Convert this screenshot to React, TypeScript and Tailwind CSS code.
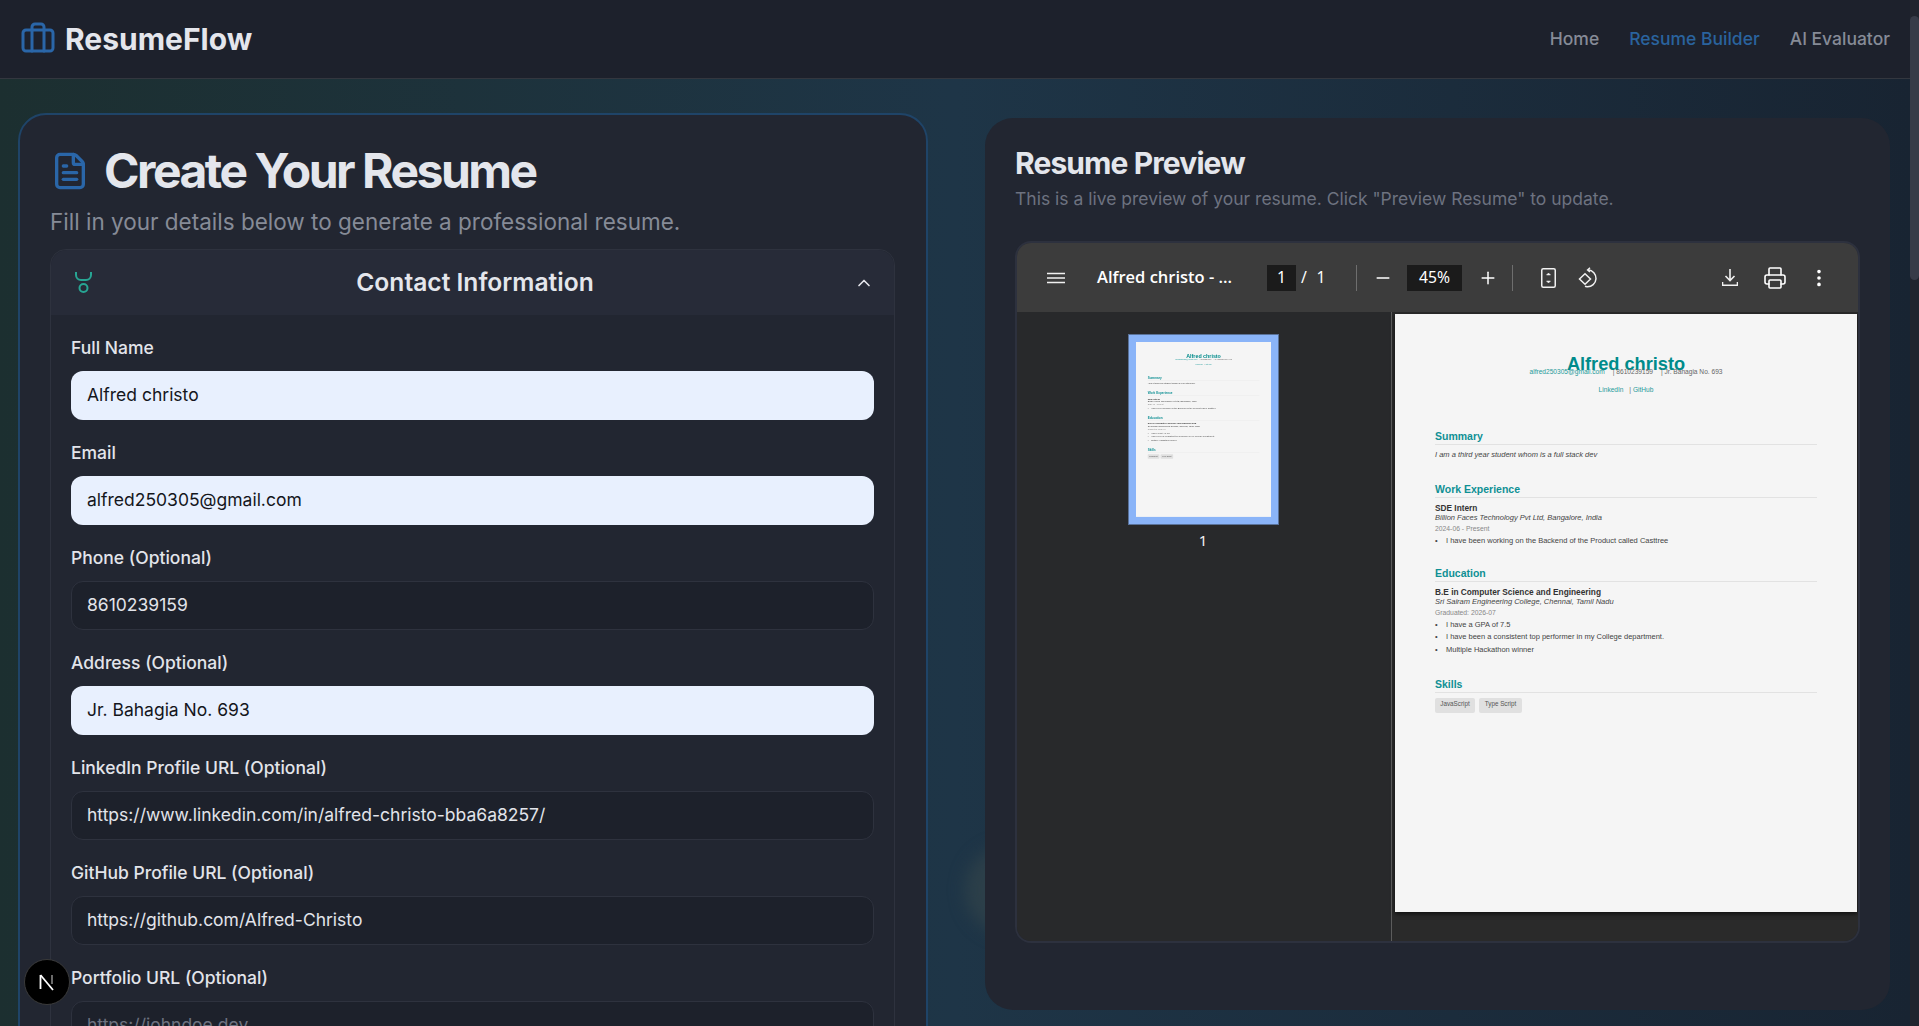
import { ChevronUp, FileText, Briefcase, Minus, MoreVertical, Plus, Printer } from "lucide-react";

const FIELDS = [
  { label: "Full Name", value: "Alfred christo", filled: true },
  { label: "Email", value: "alfred250305@gmail.com", filled: true },
  { label: "Phone (Optional)", value: "8610239159", filled: false },
  { label: "Address (Optional)", value: "Jr. Bahagia No. 693", filled: true },
  { label: "LinkedIn Profile URL (Optional)", value: "https://www.linkedin.com/in/alfred-christo-bba6a8257/", filled: false },
  { label: "GitHub Profile URL (Optional)", value: "https://github.com/Alfred-Christo", filled: false },
];

function Field({ label, value, filled }: { label: string; value: string; filled: boolean }) {
  return (
    <div className="flex flex-col gap-[11px]">
      <label className="text-[17.5px] leading-6 font-medium text-[#e2e4ea]">{label}</label>
      <div
        className={
          filled
            ? "h-[49px] flex items-center px-4 rounded-xl bg-[#e8f0fe] text-[#14161c] text-[17.5px]"
            : "h-[49px] flex items-center px-[15px] rounded-xl bg-[#1d212b] border border-[#2e323e] text-[#e2e4ea] text-[17.5px]"
        }
      >
        {value}
      </div>
    </div>
  );
}

function SectionHeading({ children, className }: { children: string; className: string }) {
  return (
    <div className={className}>
      <div className="h-[13px] text-[10.5px] leading-[13px] font-bold text-[#0f9094]">{children}</div>
      <div className="h-px mt-[1px] bg-[#e2e2e2]" />
    </div>
  );
}

function Bullet({ children, className = "" }: { children: string; className?: string }) {
  return (
    <div className={`flex text-[7.5px] leading-[10px] text-[#444] ${className}`}>
      <span className="w-[11px]">•</span>
      <span>{children}</span>
    </div>
  );
}

/** The PDF page, laid out at the 45% zoom size; the thumbnail scales this same page down. */
function ResumePage() {
  return (
    <div className="w-[462px] h-[598px] bg-[#f5f5f5] pt-[41px] px-[40px] font-['Liberation_Sans',Arial,sans-serif]">
      <div className="text-center text-[18.2px] leading-[18px] font-bold text-[#008b8b]">Alfred christo</div>
      <div className="-mt-[5px] text-center text-[6.6px] leading-[8px] text-[#666] whitespace-nowrap">
        <span className="text-[#1e9a9a]">alfred250305@gmail.com</span>
        <span className="ml-2">| 8610239159</span>
        <span className="ml-2">| Jr. Bahagia No. 693</span>
      </div>
      <div className="mt-[10px] text-center text-[6.6px] leading-[8px] text-[#1e9a9a]">
        LinkedIn <span className="ml-1 text-[#666]">|</span> GitHub
      </div>

      <SectionHeading className="mt-[36px]">Summary</SectionHeading>
      <div className="mt-[5px] text-[7.5px] leading-[10px] italic text-[#444]">I am a third year student whom is a full stack dev</div>

      <SectionHeading className="mt-[23px]">Work Experience</SectionHeading>
      <div className="mt-[5px] text-[8.3px] leading-[10px] font-bold text-[#333]">SDE Intern</div>
      <div className="text-[7.5px] leading-[10px] italic text-[#444]">Billion Faces Technology Pvt Ltd, Bangalore, India</div>
      <div className="text-[6.8px] leading-[11px] text-[#888]">2024-06 - Present</div>
      <Bullet className="mt-[2px]">I have been working on the Backend of the Product called Casttree</Bullet>

      <SectionHeading className="mt-[20.5px]">Education</SectionHeading>
      <div className="mt-[5px] text-[8.3px] leading-[10px] font-bold text-[#333]">B.E in Computer Science and Engineering</div>
      <div className="text-[7.5px] leading-[10px] italic text-[#444]">Sri Sairam Engineering College, Chennai, Tamil Nadu</div>
      <div className="text-[6.8px] leading-[11px] text-[#888]">Graduated: 2026-07</div>
      <Bullet className="mt-[2px]">I have a GPA of 7.5</Bullet>
      <Bullet className="mt-[2.5px]">I have been a consistent top performer in my College department.</Bullet>
      <Bullet className="mt-[2.5px]">Multiple Hackathon winner</Bullet>

      <SectionHeading className="mt-[23.5px]">Skills</SectionHeading>
      <div className="mt-[5px] flex gap-[4px]">
        <span className="h-[15px] w-[40px] text-center pt-[1.5px] rounded-[2px] bg-[#e0e0e0] text-[6.3px] leading-[8px] text-[#555]">JavaScript</span>
        <span className="h-[15px] w-[43px] text-center pt-[1.5px] rounded-[2px] bg-[#e0e0e0] text-[6.3px] leading-[8px] text-[#555]">Type Script</span>
      </div>
    </div>
  );
}

function PdfToolbar() {
  return (
    <div className="h-[69px] shrink-0 bg-[#3c3c3c] flex items-center text-white font-['Noto_Sans',sans-serif] text-[15.7px]">
      <svg viewBox="0 0 18 12" className="ml-[30px] w-[18px] h-[12px]" fill="none" stroke="#f1f1f1" strokeWidth="1.6">
        <path d="M0 1.5h18M0 6h18M0 10.5h18" />
      </svg>
      <span className="ml-[32px] w-[138px] font-semibold whitespace-nowrap font-['Open_Sans',sans-serif] text-[16.5px]">Alfred christo - ...</span>
      <span className="ml-[32px] w-[29px] h-[26px] bg-[#1b1b1b] flex items-center justify-center">1</span>
      <span className="ml-[4px] w-[8px] text-center">/</span>
      <span className="ml-[8px] w-[10px] text-center">1</span>
      <span className="ml-[30px] w-px h-[26px] bg-[#6e6e6e]" />
      <Minus size={20} strokeWidth={1.8} className="ml-[16px]" />
      <span className="ml-[14px] w-[55px] h-[26px] bg-[#1b1b1b] flex items-center justify-center">45%</span>
      <Plus size={20} strokeWidth={1.8} className="ml-[16px]" />
      <span className="ml-[14px] w-px h-[26px] bg-[#6e6e6e]" />
      <svg viewBox="0 0 15 20" className="ml-[28px] w-[15px] h-[20px]" fill="none" stroke="#f1f1f1">
        <rect x="0.75" y="0.75" width="13.5" height="18.5" rx="1.5" strokeWidth="1.5" />
        <path d="M5.5 7 7.5 5l2 2ZM5.5 13l2 2 2-2Z" fill="#f1f1f1" strokeWidth="0.5" />
      </svg>
      <svg viewBox="0 0 22 22" className="ml-[22px] w-[22px] h-[22px]" fill="none" stroke="#f1f1f1" strokeWidth="1.5">
        <path d="M1.5 12 7 6.7l5.5 5.3L7 17.3Z" />
        <path d="M10 2.8a8.3 8.3 0 1 1-1 17 8 8 0 0 1-2-.5" />
        <path d="M12 .8 9.6 2.9 12 5" />
      </svg>
      <svg viewBox="0 0 16 18" className="ml-[122px] w-[16px] h-[18px]" fill="none" stroke="#f1f1f1" strokeWidth="1.6">
        <path d="M8 0v11M3.5 7 8 11.5 12.5 7M0.5 13v3.2h15V13" />
      </svg>
      <Printer size={24} strokeWidth={1.6} className="ml-[25px]" />
      <MoreVertical size={22} strokeWidth={2} className="ml-[21px]" />
    </div>
  );
}

function PdfViewer() {
  return (
    <div className="mt-[28px] h-[702px] rounded-2xl border-2 border-[#2d313e] overflow-hidden flex flex-col">
      <PdfToolbar />
      <div className="flex-1 flex min-h-0">
        <div className="w-[375px] shrink-0 bg-[#28292b] border-r border-[#5c5c5c] flex flex-col items-center pt-[22px] pr-[2px]">
          <div className="w-[151px] h-[191px] border border-[#5a7299] bg-[#8ab4f8] p-[7px]">
            <div className="w-[135px] h-[175px] overflow-hidden" aria-hidden="true">
              <div className="origin-top-left scale-[0.2925]">
                <ResumePage />
              </div>
            </div>
          </div>
          <span className="mt-[4px] text-[15px] text-[#f1f1f1] font-['Noto_Sans',sans-serif]">1</span>
        </div>
        <div className="flex-1 bg-[#2a2a2a] pl-[3px] pt-[2px]">
          <div className="shadow-[0_2px_4px_rgba(0,0,0,0.6)] w-[462px]">
            <ResumePage />
          </div>
        </div>
      </div>
    </div>
  );
}

export default function App() {
  return (
    <div className="h-screen overflow-hidden flex font-['Inter',sans-serif] bg-[#1e3244]">
      <div className="relative flex-1 min-w-0 flex flex-col bg-linear-to-r from-[#1c2f30] via-[#1e3547] to-[#182432]">
        <header className="h-[79px] shrink-0 bg-[#1d212c] border-b border-[#33373f] flex items-center justify-between pl-[20px] pr-[20px]">
          <div className="flex items-center gap-[9px]">
            <Briefcase size={36} strokeWidth={2} className="text-[#2a66a8]" />
            <span className="text-[30px] leading-9 font-bold text-[#e4e6ec]">ResumeFlow</span>
          </div>
          <nav className="flex items-center gap-[30px] text-[17.5px] font-medium text-[#868b97]">
            <span>Home</span>
            <span className="text-[#2a639e]">Resume Builder</span>
            <span>AI Evaluator</span>
          </nav>
        </header>

        <main className="relative flex-1 min-h-0 overflow-hidden pl-[18px]">
          {/* soft glow peeking out from behind the preview card */}
          <div className="absolute left-[965px] top-[766px] w-[120px] h-[90px] rounded-full bg-[#2c3f49] blur-[8px]" />
          <div className="relative grid grid-cols-[910px_905px] gap-x-[57px] items-start">
            <section className="mt-[34px] rounded-[28px] border-2 border-[#1f4468] bg-[#222631] pl-[30px] pr-[31px] pt-[30px] pb-10">
              <div className="flex items-center gap-[14px] h-[52px]">
                <FileText size={40} strokeWidth={2} className="text-[#2a66a8]" />
                <h1 className="text-[48px] leading-[52px] font-bold text-[#e4e6ec] tracking-[-0.052em]">Create Your Resume</h1>
              </div>
              <p className="mt-[11px] text-[22.5px] leading-7 text-[#868b97]">Fill in your details below to generate a professional resume.</p>
              <div className="mt-[13px] rounded-2xl border border-[#2e323e]">
                <div className="h-[65px] relative flex items-center justify-center pl-[5px] bg-[#272b38] rounded-t-2xl">
                  <svg viewBox="0 0 17 21" className="absolute left-[24px] top-[22px] w-[17px] h-[21px]" fill="none" stroke="#27a593" strokeWidth="2">
                    <path d="M1 0v3a5 5 0 0 0 5 5h5a5 5 0 0 0 5-5V0" />
                    <circle cx="8.5" cy="16" r="4" />
                  </svg>
                  <span className="text-[24.6px] font-semibold text-[#e4e6ec]">Contact Information</span>
                  <ChevronUp size={20} className="absolute right-[20px] text-[#e4e6ec]" />
                </div>
                <div className="pt-[21px] px-[20px] flex flex-col gap-[21px]">
                  {FIELDS.map((f) => (
                    <Field key={f.label} {...f} />
                  ))}
                  <div className="flex flex-col gap-[11px]">
                    <label className="text-[17.5px] leading-6 font-medium text-[#e2e4ea]">Portfolio URL (Optional)</label>
                    <div className="h-[49px] flex items-center px-[15px] rounded-xl bg-[#1d212b] border border-[#2e323e] text-[#6d7280] text-[17.5px]">
                      https://johndoe.dev
                    </div>
                  </div>
                </div>
              </div>
            </section>

            <section className="mt-[39px] h-[892px] rounded-[28px] bg-[#222631] px-[30px] pt-[27px]">
              <h2 className="text-[30px] leading-9 font-bold text-[#e4e6ec] tracking-[-0.03em]">Resume Preview</h2>
              <p className="mt-[4px] text-[17.5px] leading-7 text-[#6d7280]">This is a live preview of your resume. Click "Preview Resume" to update.</p>
              <PdfViewer />
            </section>
          </div>
        </main>

        {/* dev tools badge */}
        <div className="absolute left-[24px] top-[959px] w-[46px] h-[46px] rounded-full bg-black border border-[#3a3a3a] flex items-center justify-center">
          <svg viewBox="0 0 18 18" className="w-[18px] h-[18px]" fill="none">
            <path d="M2.5 2v14" stroke="#fff" strokeWidth="1.8" />
            <path d="M2.5 2 15 17" stroke="#fff" strokeWidth="1.8" />
            <path d="M14 2v9" stroke="#999" strokeWidth="1.4" />
          </svg>
        </div>
      </div>

      <div className="w-[9px] shrink-0 bg-[#21242e] pt-[16px]">
        <div className="h-[264px] rounded-full bg-[#373b48]" />
      </div>
    </div>
  );
}
